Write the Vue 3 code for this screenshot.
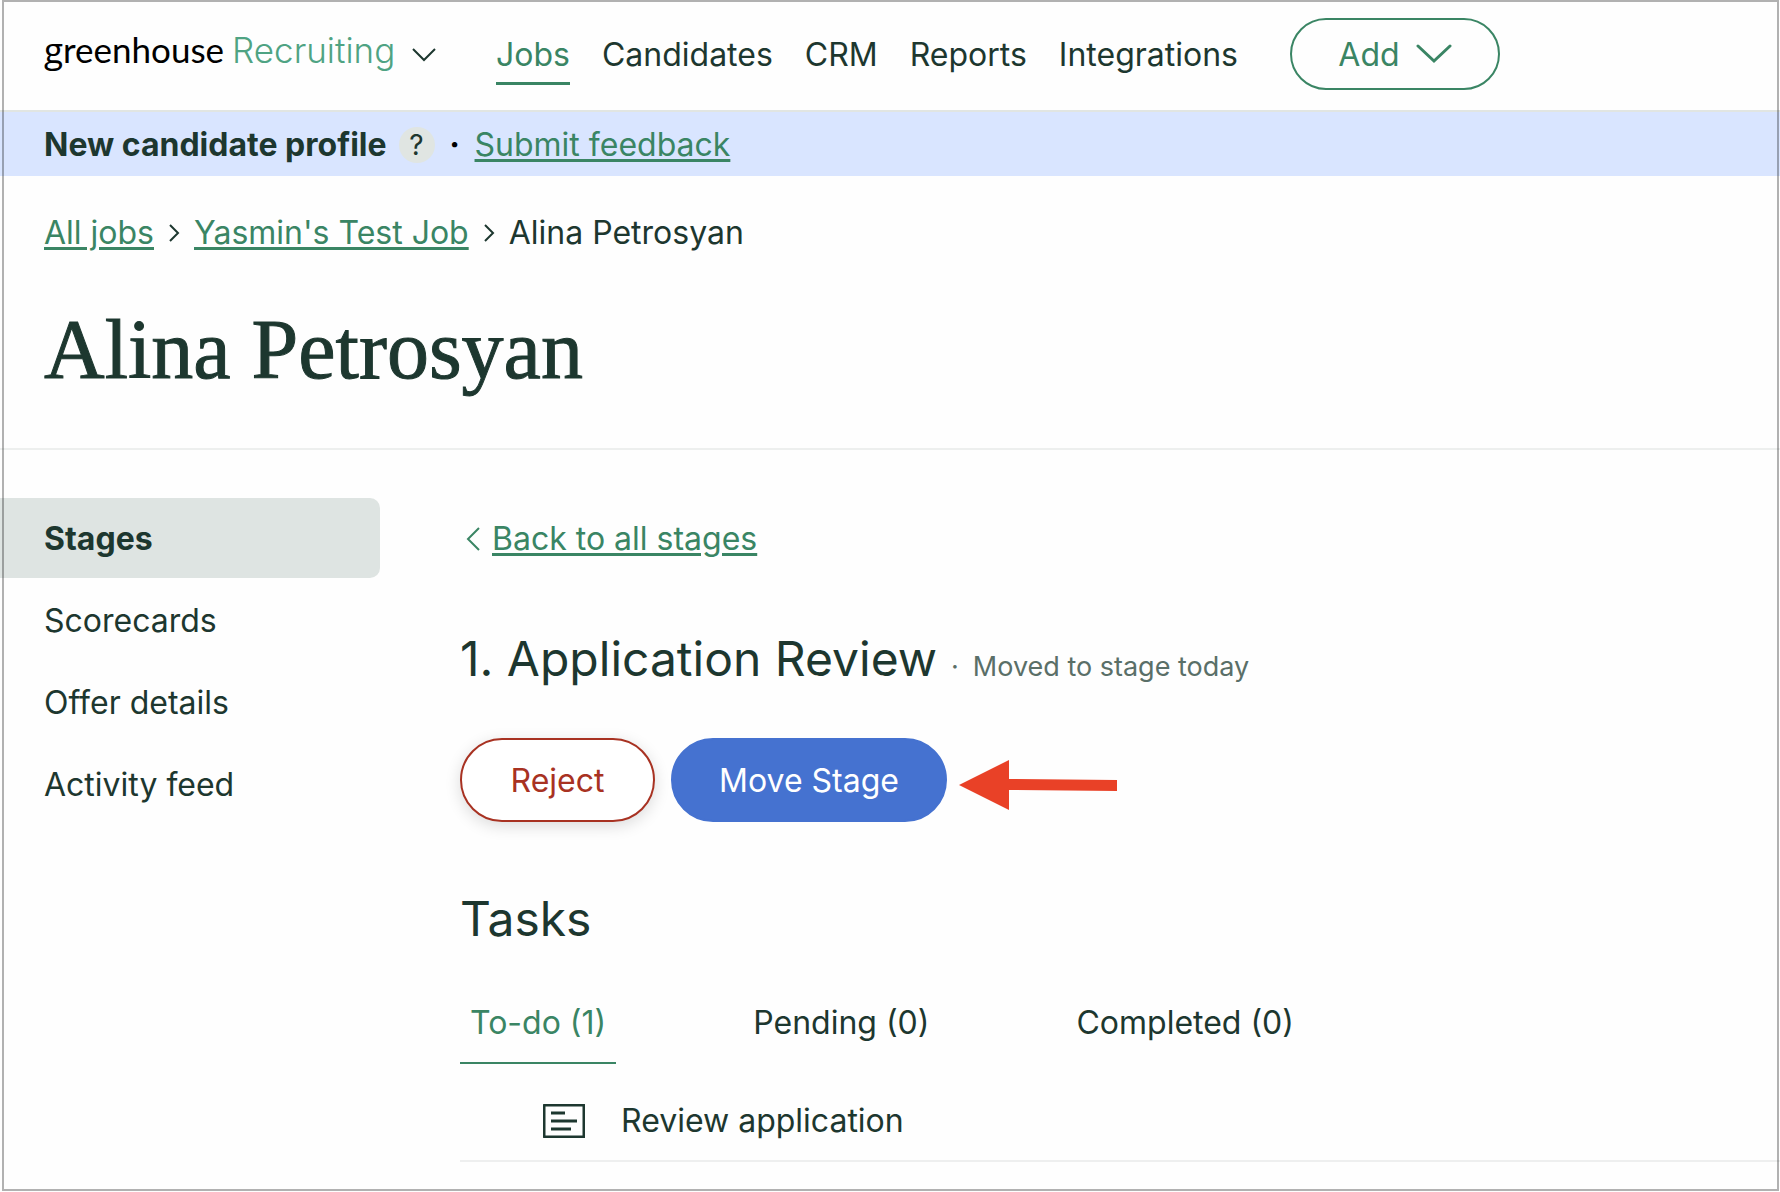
<script setup>
import { ref } from 'vue'

const navItems = ['Jobs', 'Candidates', 'CRM', 'Reports', 'Integrations']
const sections = ['Stages', 'Scorecards', 'Offer details', 'Activity feed']
const tabs = [
  { name: 'To-do', count: 1 },
  { name: 'Pending', count: 0 },
  { name: 'Completed', count: 0 },
]
const activeNav = ref('Jobs')
const activeSection = ref('Stages')
const activeTab = ref('To-do')
</script>

<template>
  <div class="page">
    <header class="topbar">
      <button class="brand" type="button" aria-label="Switch product">
        <span class="brand-text">
          <span class="brand-name"><span class="brand-g">g</span>reenhouse</span>
          <span class="brand-product">Recruiting</span>
        </span>
        <svg class="brand-chevron" width="26" height="16" viewBox="0 0 26 16" aria-hidden="true">
          <path d="M2 2 L13 13 L24 2" />
        </svg>
      </button>
      <nav class="nav">
        <a
          v-for="item in navItems"
          :key="item"
          href="#"
          class="nav-link"
          :class="{ active: item === activeNav }"
          @click.prevent="activeNav = item"
        >{{ item }}</a>
      </nav>
      <button class="pill add" type="button">
        Add
        <svg width="36" height="20" viewBox="0 0 36 20" aria-hidden="true">
          <path d="M2 2 L18 17 L34 2" />
        </svg>
      </button>
    </header>

    <div class="banner">
      <strong>New candidate profile</strong>
      <button class="help" type="button" aria-label="Help">?</button>
      <span class="banner-dot">·</span>
      <a class="link" href="#">Submit feedback</a>
    </div>

    <div class="profile">
      <nav class="crumbs" aria-label="Breadcrumb">
        <a class="link" href="#">All jobs</a>
        <svg width="12" height="20" viewBox="0 0 12 20" aria-hidden="true"><path d="M2 2 L10 10 L2 18" /></svg>
        <a class="link" href="#">Yasmin's Test Job</a>
        <svg width="12" height="20" viewBox="0 0 12 20" aria-hidden="true"><path d="M2 2 L10 10 L2 18" /></svg>
        <span>Alina Petrosyan</span>
      </nav>
      <h1>Alina Petrosyan</h1>
    </div>

    <div class="body">
      <nav class="sidebar">
        <a
          v-for="section in sections"
          :key="section"
          href="#"
          class="side-link"
          :class="{ active: section === activeSection }"
          @click.prevent="activeSection = section"
        >{{ section }}</a>
      </nav>

      <main class="content">
        <div class="back">
          <svg width="16" height="26" viewBox="0 0 16 26" aria-hidden="true"><path d="M14 2 L3 13 L14 24" /></svg>
          <a class="link" href="#">Back to all stages</a>
        </div>

        <div class="stage">
          <h2>1. Application Review</h2>
          <span class="stage-note">·</span>
          <span class="stage-note">Moved to stage today</span>
        </div>

        <div class="actions">
          <button class="pill reject" type="button">Reject</button>
          <button class="pill move" type="button">Move Stage</button>
          <svg class="arrow" width="158" height="50" viewBox="0 0 158 50" aria-hidden="true">
            <path d="M0 25 L50 0 V19 L158 20 V31 L50 30 V50 Z" />
          </svg>
        </div>

        <h2 class="tasks-title">Tasks</h2>
        <div class="tabs" role="tablist">
          <button
            v-for="tab in tabs"
            :key="tab.name"
            type="button"
            role="tab"
            class="tab"
            :class="{ active: tab.name === activeTab }"
            :aria-selected="tab.name === activeTab"
            @click="activeTab = tab.name"
          >{{ tab.name }} ({{ tab.count }})</button>
        </div>

        <ul class="tasks">
          <li class="task">
            <svg width="42" height="34" viewBox="0 0 42 34" aria-hidden="true">
              <rect x="1" y="1" width="40" height="32" rx="1" />
              <path d="M8 9 H22 M8 17 H34 M8 25 H28" />
            </svg>
            <span>Review application</span>
          </li>
        </ul>
      </main>
    </div>
    <div class="frame"></div>
  </div>
</template>

<style>
body {
  margin: 0;
}
</style>

<style scoped>
.page {
  --ink: #1d372f;
  --green: #3a8564;
  position: relative;
  box-sizing: border-box;
  min-height: 100vh;
  background: #fefefe;
  color: var(--ink);
  font-family: Inter, "Liberation Sans", sans-serif;
  font-size: 32px;
  line-height: 40px;
}
.frame {
  position: absolute;
  inset: 0 1px 1px 2px;
  border: 2px solid rgba(0, 0, 0, 0.3);
  pointer-events: none;
}
svg {
  flex: none;
  fill: none;
  stroke: currentColor;
  stroke-width: 2;
}
button {
  margin: 0;
  padding: 0;
  border: 0;
  background: none;
  color: inherit;
  font: inherit;
  cursor: pointer;
}
h1,
h2 {
  margin: 0;
  font-weight: 400;
}
.link {
  color: var(--green);
  text-decoration: underline;
  text-decoration-thickness: 3px;
  text-underline-offset: 3px;
}

.topbar {
  display: flex;
  align-items: center;
  height: 110px;
  padding-left: 44px;
  border-bottom: 2px solid #e1e5e2;
}
.brand {
  display: flex;
  align-items: center;
  width: 452px;
  padding-bottom: 12px;
}
.brand-text {
  display: flex;
  align-items: baseline;
  gap: 8px;
}
.brand-name {
  color: #000;
  font-family: Lato, sans-serif;
  font-size: 35px;
}
.brand-g {
  font-family: "Open Sans", sans-serif;
}
.brand-product {
  color: #4fa383;
  font-size: 35px;
  font-weight: 300;
}
.brand-chevron {
  margin: 12px 0 0 16px;
}
.nav {
  display: flex;
  gap: 32px;
}
.nav-link {
  padding: 10px 0 7px;
  border-bottom: 3px solid transparent;
  color: inherit;
  text-decoration: none;
}
.nav-link.active {
  border-color: var(--green);
  color: var(--green);
}
.pill {
  box-sizing: border-box;
  padding-top: 2px;
  border: 2px solid currentColor;
  border-radius: 42px;
}
.add {
  display: flex;
  align-items: center;
  justify-content: center;
  gap: 16px;
  width: 210px;
  height: 72px;
  margin: 0 0 2px 52px;
  color: var(--green);
}
.add svg {
  margin-bottom: 2px;
  stroke-width: 3;
  stroke-linecap: round;
}

.banner {
  display: flex;
  align-items: center;
  padding: 13px 44px 11px;
  background: #d9e5ff;
}
.banner strong {
  font-weight: 700;
}
.help {
  width: 36px;
  height: 36px;
  margin-left: 12px;
  border-radius: 50%;
  background: #e0e5e2;
  font-size: 28px;
  line-height: 36px;
}
.banner-dot {
  width: 40px;
  color: #000;
  font-weight: 700;
  text-align: center;
}

.profile {
  padding: 37px 44px 50px;
  border-bottom: 2px solid #edefee;
}
.crumbs {
  display: flex;
  align-items: center;
  gap: 14px;
}
h1 {
  margin-top: 49px;
  font-family: "Liberation Serif", serif;
  font-size: 84px;
  line-height: 96px;
  -webkit-text-stroke: 1px currentColor;
}

.body {
  display: flex;
  gap: 80px;
  padding-top: 48px;
}
.sidebar {
  display: flex;
  flex: none;
  flex-direction: column;
  gap: 2px;
  width: 380px;
}
.side-link {
  padding: 21px 44px 19px;
  border-radius: 0 10px 10px 0;
  color: inherit;
  text-decoration: none;
}
.side-link.active {
  background: #dee4e2;
  font-weight: 700;
}

.content {
  flex: 1;
  padding-top: 21px;
}
.back {
  display: flex;
  align-items: center;
  gap: 11px;
  padding-left: 5px;
  color: var(--green);
}
.stage {
  display: flex;
  align-items: baseline;
  gap: 14px;
  margin-top: 72px;
}
h2 {
  font-size: 48px;
  line-height: 56px;
}
.stage-note {
  color: #5a6f68;
  font-size: 27px;
}
.actions {
  display: flex;
  align-items: center;
  gap: 16px;
  margin-top: 51px;
}
.reject {
  width: 195px;
  height: 84px;
  background: #fff;
  color: #a83222;
  box-shadow: 0 4px 16px rgba(0, 0, 0, 0.14);
}
.move {
  width: 276px;
  height: 84px;
  border-color: #4572d0;
  background: #4572d0;
  color: #fff;
}
.arrow {
  margin: 9px 0 0 -4px;
  fill: #e94127;
  stroke: none;
}
.tasks-title {
  margin-top: 69px;
}
.tabs {
  display: flex;
  gap: 127px;
  margin-top: 56px;
}
.tab {
  padding: 0 10px 19px;
  border-bottom: 2px solid transparent;
}
.tab.active {
  border-color: var(--green);
  color: var(--green);
}
.tasks {
  margin: 0;
  padding: 0;
  list-style: none;
}
.task {
  display: flex;
  align-items: center;
  gap: 36px;
  padding: 37px 0 19px 83px;
  border-bottom: 2px solid #eeefef;
}
.task svg {
  stroke-width: 3;
}
</style>
